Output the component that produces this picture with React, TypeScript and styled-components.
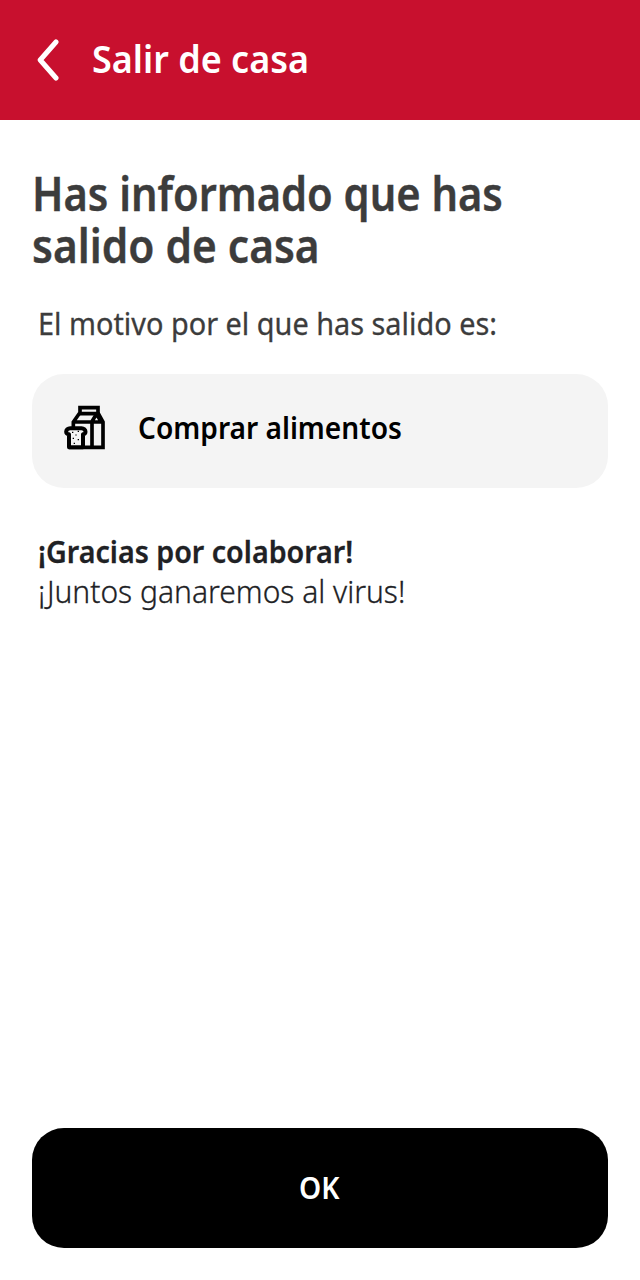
import React from 'react';
import styled, { createGlobalStyle } from 'styled-components';

const GlobalStyle = createGlobalStyle`
  *, *::before, *::after { box-sizing: border-box; }
  body {
    margin: 0;
    background: #fff;
    font-family: "Noto Sans", sans-serif;
  }
`;

const Screen = styled.div`
  display: flex;
  flex-direction: column;
  height: 1280px;
  width: 640px;
`;

const Header = styled.header`
  display: flex;
  align-items: center;
  height: 120px;
  padding-left: 36px;
  background: #c8102e;
  color: #fff;
`;

const BackButton = styled.button`
  display: flex;
  width: 56px;
  padding: 0;
  border: 0;
  background: none;
  color: inherit;
`;

const HeaderTitle = styled.h1`
  margin: 0 0 4px;
  font-size: 38px;
  line-height: 48px;
  font-weight: 600;
  white-space: nowrap;
`;

/* Narrows the letterforms of a line of text */
const Narrow = styled.span<{ $by: number; $center?: boolean }>`
  display: inline-block;
  transform: scaleX(${(p) => p.$by});
  transform-origin: ${(p) => (p.$center ? 'center' : 'left')};
`;

const Content = styled.main`
  display: flex;
  flex: 1;
  flex-direction: column;
  padding: 47px 32px 32px;
`;

const Heading = styled.h2`
  margin: 0;
  color: #3c3c3c;
  font-size: 46px;
  line-height: 52px;
  font-weight: 600;
  -webkit-text-stroke: 0.4px currentColor;
  white-space: nowrap;
`;

const Text = styled.p<{ $weight?: number; $color?: string }>`
  margin: 0;
  padding-left: 6px;
  color: ${(p) => p.$color ?? '#202124'};
  font-size: 31px;
  line-height: 40px;
  font-weight: ${(p) => p.$weight ?? 400};
  -webkit-text-stroke: 0.3px currentColor;
  white-space: nowrap;
`;

const Intro = styled(Text)`
  margin-top: 32px;
`;

const ReasonCard = styled.section`
  display: flex;
  align-items: center;
  height: 114px;
  margin: 31px 0 43px;
  padding: 0 32px 7px;
  border-radius: 32px;
  background: #f4f4f4;
`;

const ReasonLabel = styled.span`
  margin: 0 0 1px 32px;
  color: #000;
  font-size: 31px;
  line-height: 40px;
  font-weight: 600;
  white-space: nowrap;
`;

const ConfirmButton = styled.button`
  height: 120px;
  margin-top: auto;
  padding: 0 2px 2px 0;
  border: 0;
  border-radius: 32px;
  background: #000;
  color: #fff;
  font: inherit;
  font-size: 31px;
  font-weight: 600;
`;

const BackIcon = () => (
  <svg width="24" height="42" viewBox="0 0 24 42" fill="none" stroke="currentColor" strokeWidth="5" strokeLinecap="round" strokeLinejoin="round" aria-hidden="true">
    <path d="M20 3 4.2 21 20 39" />
  </svg>
);

const GroceriesIcon = () => (
  <svg width="42" height="45" viewBox="30 27 126 135" fill="none" stroke="#000" strokeWidth="11" aria-hidden="true">
    <path d="M78 35h54v18H78z" />
    <path d="M77 51 58 78v22M132 51l15 27v76H44M58 78h90M128 53l-15 25M128 55l14 23" />
    <path d="M114 78v76" />
    <path d="M45 154v-39c-6-1-8.500-4-8.500-8 0-6 5-10.500 12-10.500h34c7 0 12 4.500 12 10.500 0 4-2.500 7-7.500 8v39z" strokeWidth="12" strokeLinejoin="round" fill="#f4f4f4" />
    <path d="M54 109h4M71 106h4M64 117h4M56 127h4M71 131h4M59 142h4" strokeWidth="3.500" />
  </svg>
);

export default function App() {
  return (
    <>
      <GlobalStyle />
      <Screen>
        <Header>
          <BackButton aria-label="Volver">
            <BackIcon />
          </BackButton>
          <HeaderTitle>
            <Narrow $by={0.947}>Salir de casa</Narrow>
          </HeaderTitle>
        </Header>
        <Content>
          <Heading>
            <Narrow $by={0.905}>Has informado que has</Narrow>
            <br />
            <Narrow $by={0.922}>salido de casa</Narrow>
          </Heading>
          <Intro $color="#3c3c3c">
            <Narrow $by={0.931}>El motivo por el que has salido es:</Narrow>
          </Intro>
          <ReasonCard>
            <GroceriesIcon />
            <ReasonLabel>
              <Narrow $by={0.907}>Comprar alimentos</Narrow>
            </ReasonLabel>
          </ReasonCard>
          <Text $weight={600}>
            <Narrow $by={0.924}>¡Gracias por colaborar!</Narrow>
          </Text>
          <Text $weight={300}>
            <Narrow $by={0.968}>¡Juntos ganaremos al virus!</Narrow>
          </Text>
          <ConfirmButton>
            <Narrow $by={0.91} $center>OK</Narrow>
          </ConfirmButton>
        </Content>
      </Screen>
    </>
  );
}
